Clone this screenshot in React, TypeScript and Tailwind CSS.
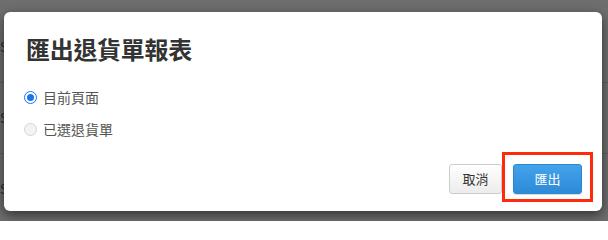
import { useState } from "react";

const font = { fontFamily: '"Noto Sans CJK TC", "Noto Sans", sans-serif' };

function Radio({ checked, label, onClick }: { checked: boolean; label: string; onClick: () => void }) {
  return (
    <label className="flex h-5 items-center gap-[6px] cursor-pointer" onClick={onClick}>
      {checked ? (
        <span className="flex h-[13px] w-[13px] items-center justify-center rounded-full border-[1.5px] border-[#1a73f0] bg-white">
          <span className="h-[7px] w-[7px] rounded-full bg-[#1a73f0]" />
        </span>
      ) : (
        <span className="h-[13px] w-[13px] rounded-full border border-[#d4d4d4] bg-[#f3f3f3]" />
      )}
      <span className="text-[14px] leading-5 text-[#555]">{label}</span>
    </label>
  );
}

export default function App() {
  const [scope, setScope] = useState("page");

  return (
    <div className="relative h-[221px] w-[608px] overflow-hidden bg-white" style={font}>
      {/* page behind the modal */}
      <div className="flex flex-col pt-[12px]">
        {[0, 1, 2].map((i) => (
          <div key={i} className="flex h-[71px] items-center border-b border-[#ddd]">
            <span className="text-[13px] text-[#2a6496]">Si</span>
          </div>
        ))}
      </div>

      {/* overlay */}
      <div className="absolute inset-0 bg-[#000]/[0.57]" />

      {/* dialog */}
      <div className="absolute left-[4px] top-[12px] flex h-[199px] w-[598px] flex-col rounded-[6px] bg-white px-[22px] pt-[22px] shadow-[0_4px_12px_rgba(0,0,0,0.55)]">
        <h1 className="text-[24px] font-bold leading-[30px] tracking-[-0.3px] text-[#333]">匯出退貨單報表</h1>

        <div className="mt-[23px] -ml-[2px] flex flex-col gap-3">
          <Radio checked={scope === "page"} label="目前頁面" onClick={() => setScope("page")} />
          <Radio checked={scope === "selected"} label="已選退貨單" onClick={() => setScope("selected")} />
        </div>

        <div className="mt-[25px] -mr-[2px] flex justify-end gap-[11px]">
          <button className="h-[30px] w-[53px] rounded-[3px] border border-[#ccc] bg-gradient-to-b from-white to-[#ececec] text-[13px] text-[#333]">
            取消
          </button>
          <div className="relative">
            <button className="h-[30px] w-[69px] rounded-[3px] border border-[#2a86d1] bg-gradient-to-b from-[#43a3ea] to-[#2d8ad8] text-[13px] text-white shadow-[0_1px_1px_rgba(0,0,0,0.15)]">
              匯出
            </button>
            <div className="pointer-events-none absolute -left-[11px] -right-[11px] -top-[12px] -bottom-[8px] border-[3px] border-[#ff2a0c]" />
          </div>
        </div>
      </div>
    </div>
  );
}
